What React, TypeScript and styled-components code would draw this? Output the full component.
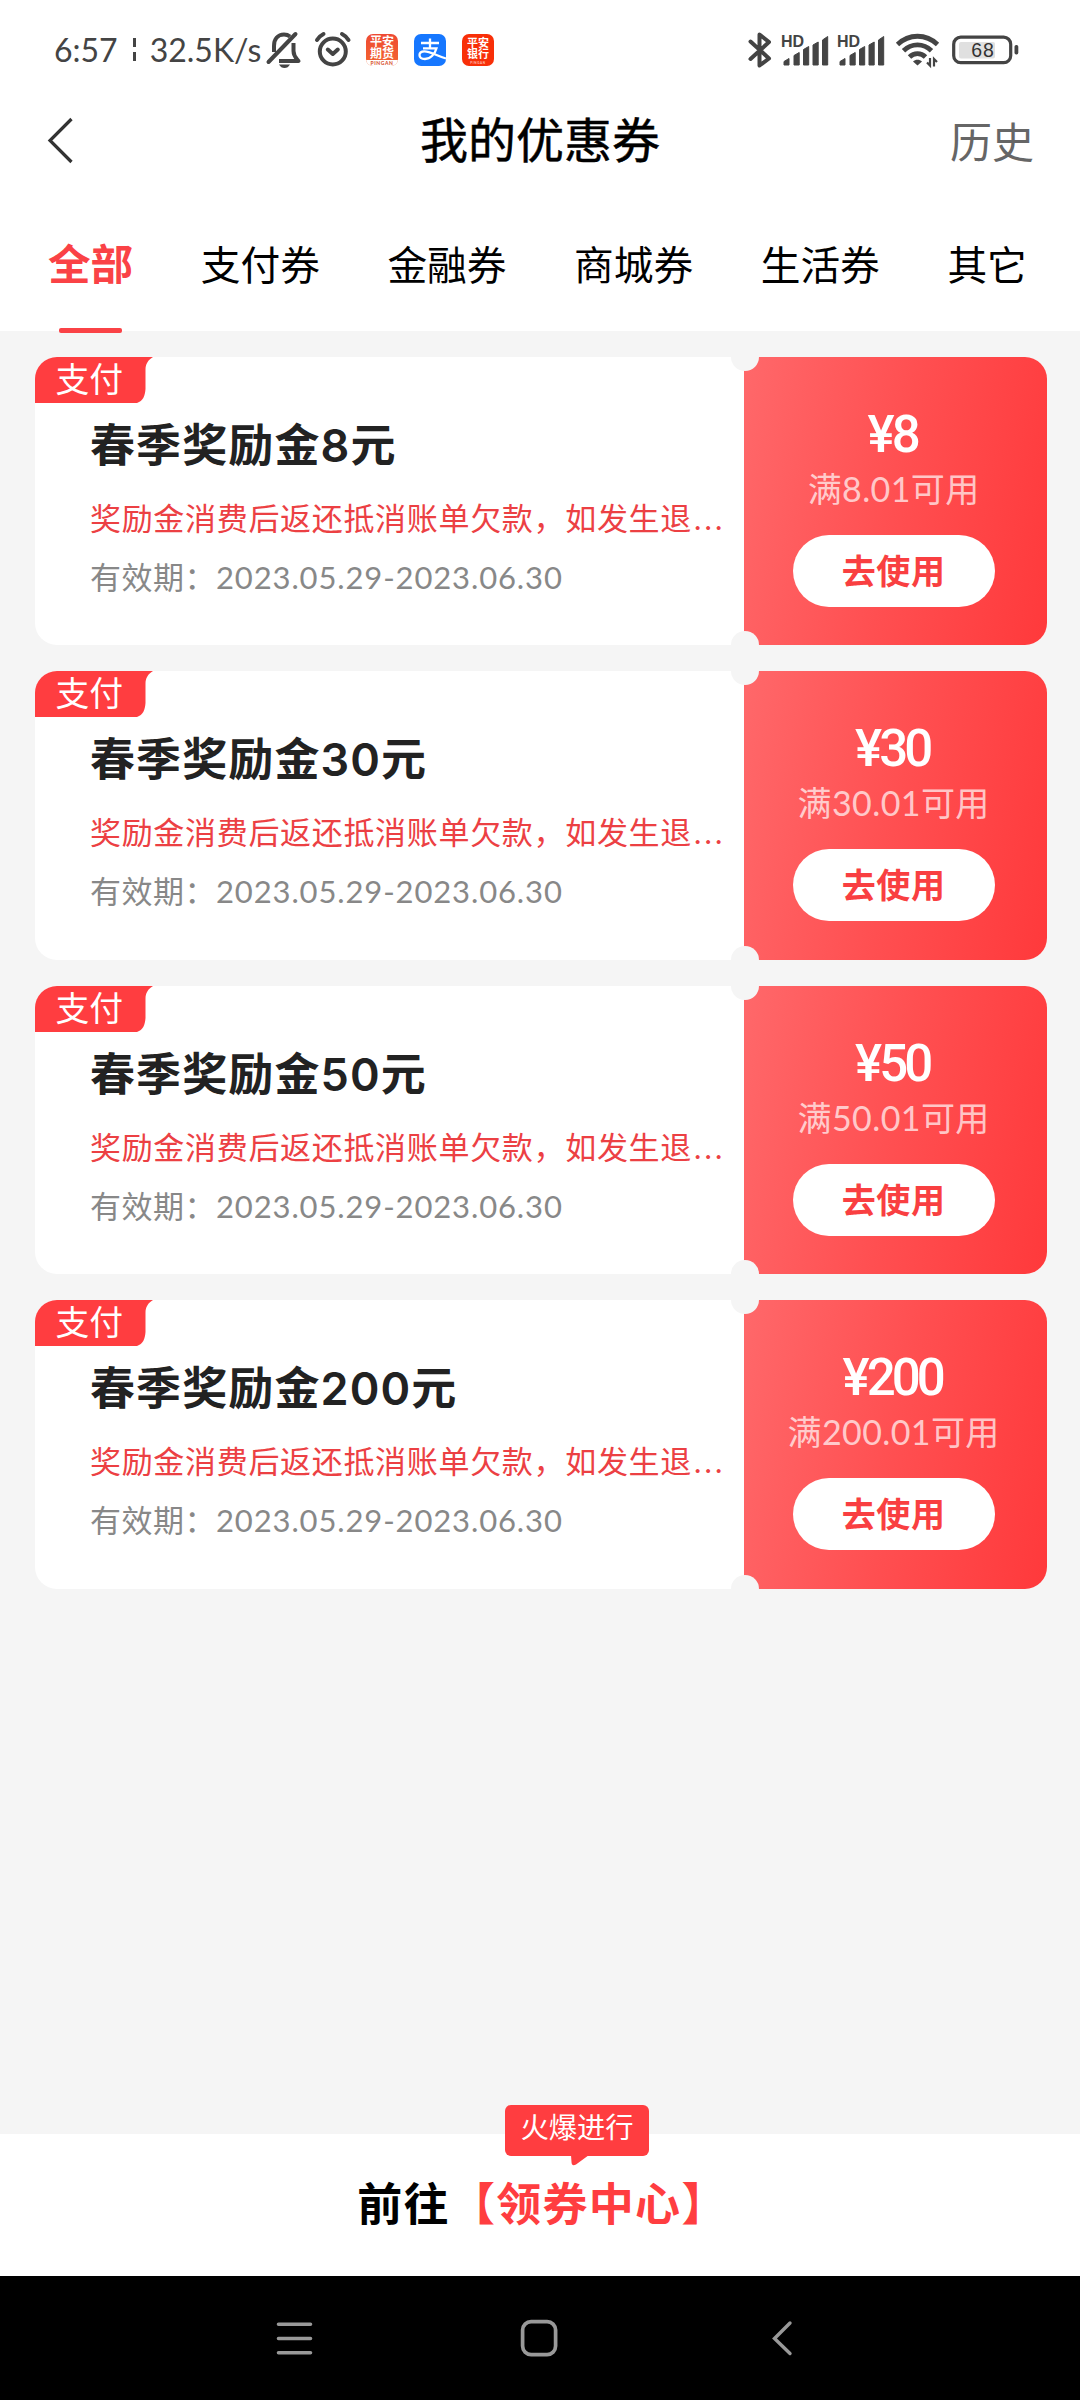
import React from "react";
import styled, { createGlobalStyle } from "styled-components";

const sans = `Lato, "Noto Sans CJK SC", sans-serif`;
const RED = "#ff3d40";
const PAGE = "#f5f5f5";

const GlobalStyle = createGlobalStyle`
  * { box-sizing: border-box; }
  body { margin: 0; background: ${PAGE}; font-family: ${sans}; }
  button { border: 0; padding: 0; background: none; font-family: inherit; }
`;

const Screen = styled.div`
  width: 1080px;
  height: 2400px;
  display: flex;
  flex-direction: column;
  background: ${PAGE};
  overflow: hidden;
`;

const StatusBar = styled.header`
  height: 98px;
  flex: none;
  display: flex;
  align-items: center;
  justify-content: space-between;
  padding: 1px 61px 0 54px;
  background: #fff;
`;

const StatusGroup = styled.div`
  display: flex;
  align-items: center;
`;

const StatusText = styled.div`
  width: 212px;
  display: flex;
  align-items: center;
  font-size: 32px;
  line-height: 44px;
  letter-spacing: 0;
  color: #444;
  white-space: nowrap;
`;

const Divider = styled.span`
  width: 3px;
  height: 23px;
  margin: 0 14px 0 15px;
  background: linear-gradient(#444 0 9px, transparent 9px 14px, #444 14px);
`;

const Icon = styled.svg<{ $left?: number }>`
  display: block;
  flex: none;
  margin-left: ${(p) => p.$left ?? 0}px;
  overflow: visible;
`;

const AppBadge = styled.span<{ $bg: string; $left: number; $top: number }>`
  width: 32px;
  height: 32px;
  margin-left: ${(p) => p.$left}px;
  padding-top: ${(p) => p.$top}px;
  border-radius: 7px;
  background: ${(p) => p.$bg};
  color: #fff;
  display: flex;
  flex-direction: column;
  align-items: center;
  overflow: hidden;
`;

const BadgeWord = styled.span<{ $size: number }>`
  font-size: ${(p) => p.$size}px;
  line-height: ${(p) => p.$size}px;
  height: ${(p) => p.$size}px;
  font-weight: 700;
`;

const BadgeFoot = styled.span<{ $color: string; $bg: string; $size: number }>`
  width: 100%;
  margin-top: auto;
  height: 6px;
  font-size: ${(p) => p.$size}px;
  line-height: 6px;
  font-weight: 900;
  letter-spacing: 0.6px;
  text-align: center;
  color: ${(p) => p.$color};
  background: ${(p) => p.$bg};
`;

const TitleBar = styled.div`
  height: 84px;
  flex: none;
  display: grid;
  grid-template-columns: 140px 1fr 140px;
  align-items: center;
  padding: 0 46px;
  background: #fff;
`;

const Title = styled.h1`
  margin: 0;
  text-align: center;
  font-size: 48px;
  line-height: 64px;
  font-weight: 400;
  color: #000;
  -webkit-text-stroke: 0.5px #000;
`;

const History = styled.button`
  text-align: right;
  font-size: 42px;
  line-height: 60px;
  color: #666;
  padding-top: 3px;
`;

const Tabs = styled.nav`
  height: 149px;
  flex: none;
  display: flex;
  align-items: flex-start;
  gap: 67.6px;
  padding: 50px 48px 0;
  background: #fff;
`;

const Tab = styled.button<{ $active?: boolean }>`
  position: relative;
  height: 102px;
  flex: none;
  display: flex;
  align-items: flex-start;
  font-size: ${(p) => (p.$active ? 42.6 : 39.7)}px;
  line-height: ${(p) => (p.$active ? 64 : 66)}px;
  font-weight: ${(p) => (p.$active ? 700 : 400)};
  color: ${(p) => (p.$active ? "#fa4246" : "#000")};
  ${(p) =>
    p.$active &&
    `&::after {
      content: "";
      position: absolute;
      left: 11px;
      bottom: 1px;
      width: 63px;
      height: 5px;
      border-radius: 2px;
      background: #fa4246;
    }`}
`;

const List = styled.main`
  flex: 1;
  display: flex;
  flex-direction: column;
  gap: 26px;
  padding: 26px 33px 0 35px;
`;

const Card = styled.article`
  position: relative;
  height: 288.4px;
  flex: none;
  display: flex;
  border-radius: 22px;
  overflow: hidden;
  background: #fff;
`;

const Notch = styled.i<{ $edge: "top" | "bottom" }>`
  position: absolute;
  left: 696px;
  ${(p) => p.$edge}: -14px;
  width: 28px;
  height: 28px;
  border-radius: 50%;
  background: ${PAGE};
`;

const Info = styled.div`
  width: 709.3px;
  display: flex;
  flex-direction: column;
  align-items: flex-start;
`;

const Tag = styled.div`
  position: relative;
  width: 118px;
  height: 46px;
  padding-left: 20.5px;
  font-size: 33.8px;
  line-height: 44px;
  color: #fff;
`;

const TagShape = styled.svg`
  position: absolute;
  left: 0;
  top: 0;
`;

const TagText = styled.span`
  position: relative;
`;

const CardTitle = styled.h2`
  margin: 11px 0 0 55px;
  font-family: Inter, "Noto Sans CJK SC", sans-serif;
  font-size: 45px;
  line-height: 64px;
  letter-spacing: 1.1px;
  font-weight: 600;
  color: #222;
`;

const Desc = styled.p`
  width: 640px;
  margin: 16px 0 0 55px;
  font-size: 31px;
  line-height: 48px;
  letter-spacing: 0.68px;
  white-space: nowrap;
  color: #ec4043;
`;

const Ellipsis = styled.span`
  letter-spacing: 3.2px;
  margin-left: 2px;
`;

const Validity = styled.p`
  margin: 11px 0 0 55px;
  font-size: 31px;
  line-height: 48px;
  letter-spacing: 0.5px;
  white-space: nowrap;
  color: #888;
`;

const Period = styled.span`
  letter-spacing: 0.87px;
`;

const Offer = styled.div`
  flex: 1;
  display: flex;
  flex-direction: column;
  align-items: center;
  padding: 46px 4px 0 0;
  background: linear-gradient(100deg, #ff6769 2%, #ff4f51 50%, #ff3a3c 98%);
`;

const Price = styled.strong`
  font-family: Roboto, sans-serif;
  font-size: 51px;
  line-height: 64px;
  font-weight: 500;
  letter-spacing: -4px;
  margin-left: -3px;
  color: #fff;
`;

const Yen = styled.span`
  letter-spacing: -3px;
`;

const Condition = styled.span`
  margin-top: -2px;
  font-size: 34px;
  line-height: 48px;
  letter-spacing: 0.4px;
  color: rgba(255, 255, 255, 0.7);
  white-space: nowrap;
`;

const UseButton = styled.button`
  width: 202px;
  height: 72px;
  margin-top: 22px;
  border-radius: 36px;
  background: #fff;
  color: #f93f41;
  font-size: 34px;
  line-height: 70px;
  font-weight: 600;
  letter-spacing: 0.6px;
`;

const Footer = styled.footer`
  position: relative;
  height: 142px;
  flex: none;
  display: flex;
  justify-content: center;
  padding: 37px 0 0 5px;
  background: #fff;
  font-size: 45px;
  line-height: 66px;
  letter-spacing: 1.3px;
  font-weight: 600;
  color: #000;
`;

const Accent = styled.span`
  color: ${RED};
`;

const Bubble = styled.span`
  position: absolute;
  left: 505px;
  top: -29px;
  width: 144px;
  height: 51px;
  border-radius: 6px;
  background: ${RED};
  color: #fff;
  font-size: 28.3px;
  line-height: 45px;
  letter-spacing: 0;
  font-weight: 400;
  text-align: center;
`;

const BubbleTail = styled.svg`
  position: absolute;
  left: 66px;
  top: 50px;
`;

const NavBar = styled.nav`
  height: 124px;
  flex: none;
  display: flex;
  align-items: center;
  padding: 0 0 0 276px;
  background: #000;
`;

const coupons = ["8", "30", "50", "200"];
const tabs = ["全部", "支付券", "金融券", "商城券", "生活券", "其它"];

function BellOff() {
  return (
    <Icon width="36" height="38" viewBox="0 0 36 38" fill="none" stroke="#444" strokeWidth="4">
      <path d="M8 21V15C8 8 12 3.500 18 3.500C20.500 3.500 22.500 4.300 24 5.500" />
      <path d="M27.500 12V20C27.500 25 30 27 32.500 30H13" strokeLinejoin="round" />
      <path d="M2.500 31L29.500 3" strokeLinecap="round" />
      <path d="M13 33.500H24C22.500 36 21 37 18.500 37S14.500 36 13 33.500Z" fill="#444" stroke="none" />
    </Icon>
  );
}

function Alarm() {
  return (
    <Icon $left={12} width="38" height="38" viewBox="0 0 38 38" fill="none" stroke="#444" strokeLinecap="round">
      <circle cx="18.800" cy="20.500" r="13" strokeWidth="4" />
      <path d="M13.800 18.500L18.800 23L23.800 18.500" strokeWidth="4" strokeLinejoin="round" />
      <path d="M3 9C4.500 6.500 6.500 4.500 9.500 3M28 3C31 4.500 33 6.500 34.500 9" strokeWidth="4" />
    </Icon>
  );
}

function Alipay() {
  return (
    <Icon $left={16} width="32" height="32" viewBox="0 0 32 32">
      <rect width="32" height="32" rx="7" fill="#1677ff" />
      <path
        d="M7 9H25M16 4.500V14M9 14.300H22.500C21 20 16.500 25 11 25C7.500 25 5.500 23.200 5.500 21C5.500 18.800 7.500 17.300 10.500 17.300C16 17.300 22 21.500 32 24.500"
        fill="none"
        stroke="#fff"
        strokeWidth="2.300"
      />
    </Icon>
  );
}

function Bluetooth() {
  return (
    <Icon width="24" height="38" viewBox="0 0 24 38">
      <path
        d="M2.500 10.500L21 27.500L11.500 34.500V3.500L21 11L2.500 28"
        fill="none"
        stroke="#444"
        strokeWidth="4"
        strokeLinejoin="round"
        strokeLinecap="round"
      />
    </Icon>
  );
}

function Signal({ left }: { left: number }) {
  return (
    <Icon $left={left} width="47" height="32" viewBox="0 0 47 32" fill="#444">
      <text x="-1" y="13" fontFamily="Liberation Sans" fontWeight="700" fontSize="16">
        HD
      </text>
      <path d="M2 31V27.500L7 24.500V31ZM12 31V21.500L17.200 18.500V31ZM21.500 31V15.500L26.700 12.500V31ZM31 31V11L36.200 8V31ZM40.500 31V6L45.700 2.500V31Z" stroke="#444" strokeWidth="1" strokeLinejoin="round" />
    </Icon>
  );
}

function Wifi() {
  return (
    <Icon $left={11} width="43" height="34" viewBox="0 0 43 34" fill="none" stroke="#444" strokeWidth="4.800">
      <path d="M1.500 11.500C13 0.500 30 0.500 41.500 11.500" />
      <path d="M7.500 17.800C15.500 10 27.500 10 35.500 17.800" />
      <path d="M13.500 24C18 19.500 25 19.500 29.500 24" />
      <path d="M17 28.500C19.500 26 23.500 26 26 28.500L21.500 32.500Z" fill="#444" stroke="none" />
      <path d="M34 25V32.500L31 29.500M38 33.500V26L41 29" strokeWidth="2.200" />
    </Icon>
  );
}

function Battery() {
  return (
    <Icon $left={13} width="67" height="30" viewBox="0 0 67 30">
      <rect x="1.700" y="2.200" width="57" height="25.500" rx="7" fill="#fff" stroke="#444" strokeWidth="3.200" />
      <rect x="7" y="7" width="36" height="16.500" rx="2" fill="#e0e0e0" />
      <rect x="62.500" y="10" width="3.800" height="9.500" rx="1.700" fill="#444" />
      <text x="31" y="21.900" textAnchor="middle" fontFamily="Liberation Sans" fontSize="19.500" letterSpacing="1" fill="#333">
        68
      </text>
    </Icon>
  );
}

function Coupon({ amount }: { amount: string }) {
  return (
    <Card>
      <Info>
        <Tag>
          <TagShape width="118" height="46" viewBox="0 0 118 46">
            <path d="M0 0H118C113 3 110.500 7 110.500 13V32C110 39 108 44 102 46H0Z" fill={RED} />
          </TagShape>
          <TagText>支付</TagText>
        </Tag>
        <CardTitle>春季奖励金{amount}元</CardTitle>
        <Desc>
          奖励金消费后返还抵消账单欠款，如发生退<Ellipsis>...</Ellipsis>
        </Desc>
        <Validity>
          有效期：<Period>2023.05.29-2023.06.30</Period>
        </Validity>
      </Info>
      <Offer>
        <Price>
          <Yen>¥</Yen>
          {amount}
        </Price>
        <Condition>满{amount}.01可用</Condition>
        <UseButton>去使用</UseButton>
      </Offer>
      <Notch $edge="top" />
      <Notch $edge="bottom" />
    </Card>
  );
}

export default function App() {
  return (
    <Screen>
      <GlobalStyle />
      <StatusBar>
        <StatusGroup>
          <StatusText>
            <span>6:57</span>
            <Divider />
            <span>32.5K/s</span>
          </StatusText>
          <BellOff />
          <Alarm />
          <AppBadge $bg="linear-gradient(#ee4a33, #f4662f)" $left={14} $top={2}>
            <BadgeWord $size={12}>平安</BadgeWord>
            <BadgeWord $size={12}>期货</BadgeWord>
            <BadgeFoot $size={5} $color="#d8532f" $bg="#fff">PINGAN</BadgeFoot>
          </AppBadge>
          <Alipay />
          <AppBadge $bg="#f82f08" $left={16} $top={3}>
            <BadgeWord $size={11}>平安</BadgeWord>
            <BadgeWord $size={11}>银行</BadgeWord>
            <BadgeFoot $size={3} $color="#ffb9a8" $bg="transparent">PINGAN</BadgeFoot>
          </AppBadge>
        </StatusGroup>
        <StatusGroup>
          <Bluetooth />
          <Signal left={10} />
          <Signal left={9} />
          <Wifi />
          <Battery />
        </StatusGroup>
      </StatusBar>
      <TitleBar>
        <Icon width="28" height="48" viewBox="0 0 28 48">
          <path d="M25.500 3L4 24.500L25.500 46" fill="none" stroke="#333" strokeWidth="3.200" />
        </Icon>
        <Title>我的优惠券</Title>
        <History>历史</History>
      </TitleBar>
      <Tabs>
        {tabs.map((name, i) => (
          <Tab key={name} $active={i === 0}>
            {name}
          </Tab>
        ))}
      </Tabs>
      <List>
        {coupons.map((amount) => (
          <Coupon key={amount} amount={amount} />
        ))}
      </List>
      <Footer>
        <span>前往</span>
        <Accent>【领券中心】</Accent>
        <Bubble>
          火爆进行
          <BubbleTail width="18" height="11" viewBox="0 0 18 11">
            <path d="M0 0H18L5 9.500C2 11 0.500 10 0.500 7Z" fill={RED} />
          </BubbleTail>
        </Bubble>
      </Footer>
      <NavBar>
        <Icon width="37" height="36" viewBox="0 0 37 36">
          <path d="M2.500 4.300H34.500M2.500 18.500H34.500M2.500 32.700H34.500" stroke="#999" strokeWidth="3.600" strokeLinecap="round" />
        </Icon>
        <Icon $left={207} width="38" height="38" viewBox="0 0 38 38">
          <rect x="2.600" y="2.600" width="33" height="33" rx="8.500" fill="none" stroke="#999" strokeWidth="3.700" />
        </Icon>
        <Icon $left={213} width="22" height="36" viewBox="0 0 22 36">
          <path d="M19 3L3.500 18.500L19 33.500" fill="none" stroke="#999" strokeWidth="3.400" strokeLinecap="round" />
        </Icon>
      </NavBar>
    </Screen>
  );
}
